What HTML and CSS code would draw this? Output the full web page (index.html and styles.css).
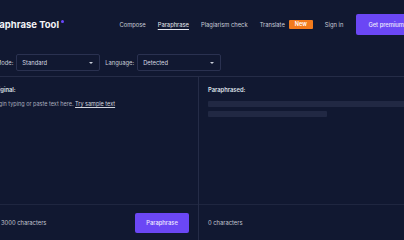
FILE: index.html
```html
<!DOCTYPE html>
<html lang="en">
<head>
    <meta charset="UTF-8">
    <meta name="viewport" content="width=device-width, initial-scale=1.0">
    <title>Paraphrase Tool</title>
    <link rel="stylesheet" href="styles.css">
</head>
<body>
    <div class="page">
        <header class="topbar">
            <div class="brand">Paraphrase Tool<span class="dot"></span></div>
            <nav class="nav">
                <a href="#">Compose</a>
                <a href="#" class="active">Paraphrase</a>
                <a href="#">Plagiarism check</a>
                <a href="#" class="with-badge">Translate <span class="badge">New</span></a>
                <a href="#">Sign in</a>
                <a href="#" class="premium">Get premium</a>
            </nav>
        </header>

        <div class="toolbar">
            <label class="field-label">Mode:</label>
            <div class="select">Standard <span class="caret"></span></div>
            <label class="field-label lang">Language:</label>
            <div class="select">Detected <span class="caret"></span></div>
        </div>

        <div class="panels">
            <section class="panel left">
                <div class="panel-body">
                    <p class="panel-title">Original:</p>
                    <p class="placeholder">Begin typing or paste text here. <a href="#">Try sample text</a></p>
                </div>
                <div class="panel-foot">
                    <span class="count">0 / 3000 characters</span>
                    <button class="go">Paraphrase</button>
                </div>
            </section>
            <section class="panel right">
                <div class="panel-body">
                    <p class="panel-title">Paraphrased:</p>
                    <div class="skeleton long"></div>
                    <div class="skeleton short"></div>
                </div>
                <div class="panel-foot">
                    <span class="count">0 characters</span>
                </div>
            </section>
        </div>
    </div>
</body>
</html>
```

FILE: styles.css
```css
html, body {
    margin: 0;
    padding: 0;
    background: #111831;
    overflow: hidden;
}
body {
    font-family: Inter, 'Liberation Sans', sans-serif;
    color: #cfd3dd;
    font-size: 5.8px;
}
.page {
    width: 440px;
    margin-left: -17px;
    height: 240px;
    display: flex;
    flex-direction: column;
}
.topbar {
    height: 48px;
    display: flex;
    align-items: center;
    padding: 0 7px 0 1px;
}
.brand {
    font-size: 9.5px;
    font-weight: 700;
    color: #f2f3f7;
    position: relative;
    padding-right: 5px;
}
.dot {
    position: absolute;
    right: 0;
    top: 1px;
    width: 3px;
    height: 3px;
    border-radius: 50%;
    background: #6b47ff;
}
.nav {
    margin-left: auto;
    display: flex;
    align-items: center;
    gap: 12px;
}
.nav a {
    color: #c9cdd8;
    text-decoration: none;
}
.nav a.active {
    color: #e6e8ef;
    text-decoration: underline;
    text-underline-offset: 2px;
}
.with-badge {
    display: flex;
    align-items: center;
    gap: 4px;
}
.badge {
    background: #f27a1c;
    color: #fff;
    font-weight: 600;
    font-size: 5.5px;
    line-height: 7px;
    padding: 1px 6px;
    border-radius: 1px;
}
.nav a.premium {
    background: #6b47f5;
    color: #eeeafe;
    line-height: 7px;
    padding: 7px 12px;
    border-radius: 2px;
    font-weight: 500;
    margin-left: 1px;
}
.toolbar {
    height: 29px;
    box-sizing: border-box;
    display: flex;
    align-items: center;
    padding-left: 13px;
    padding-top: 1px;
    border-bottom: 1px solid #252c47;
}
.field-label {
    color: #c9cdd8;
    margin-right: 3px;
}
.field-label.lang {
    margin-left: 5px;
}
.select {
    width: 84px;
    height: 17px;
    box-sizing: border-box;
    border: 1px solid #2a3150;
    border-radius: 2px;
    display: flex;
    align-items: center;
    justify-content: space-between;
    padding: 0 6px 0 5px;
    color: #d4d7e0;
}
.caret {
    width: 0;
    height: 0;
    border-left: 2.5px solid transparent;
    border-right: 2.5px solid transparent;
    border-top: 2.5px solid #c9cdd8;
}
.panels {
    flex: 1;
    display: grid;
    grid-template-columns: 216px 1fr;
}
.panel {
    display: flex;
    flex-direction: column;
}
.panel.left {
    border-right: 1px solid #252c47;
}
.panel-body {
    flex: 1;
    padding: 8px 9px;
}
.panel-title {
    margin: 0 0 4px;
    line-height: 10px;
    font-weight: 600;
    color: #dde0e8;
}
.placeholder {
    margin: 0;
    line-height: 10px;
    font-size: 5.5px;
    color: #a9aebd;
}
.placeholder a {
    color: #d2d5de;
    text-decoration: underline;
}
.skeleton {
    background: #212843;
    height: 6px;
    border-radius: 1px;
}
.skeleton.long {
    margin-top: 6px;
}
.skeleton.short {
    width: 119px;
    margin-top: 4px;
}
.panel-foot {
    height: 36px;
    box-sizing: border-box;
    border-top: 1px solid #1f2640;
    display: flex;
    align-items: center;
    justify-content: space-between;
    padding: 0 9px;
}
.count {
    color: #c1c5d0;
}
.go {
    background: #6b47f5;
    color: #eeeafe;
    border: none;
    border-radius: 2px;
    width: 54px;
    height: 20px;
    font-family: inherit;
    font-size: 5.8px;
    font-weight: 500;
    cursor: pointer;
}
```
